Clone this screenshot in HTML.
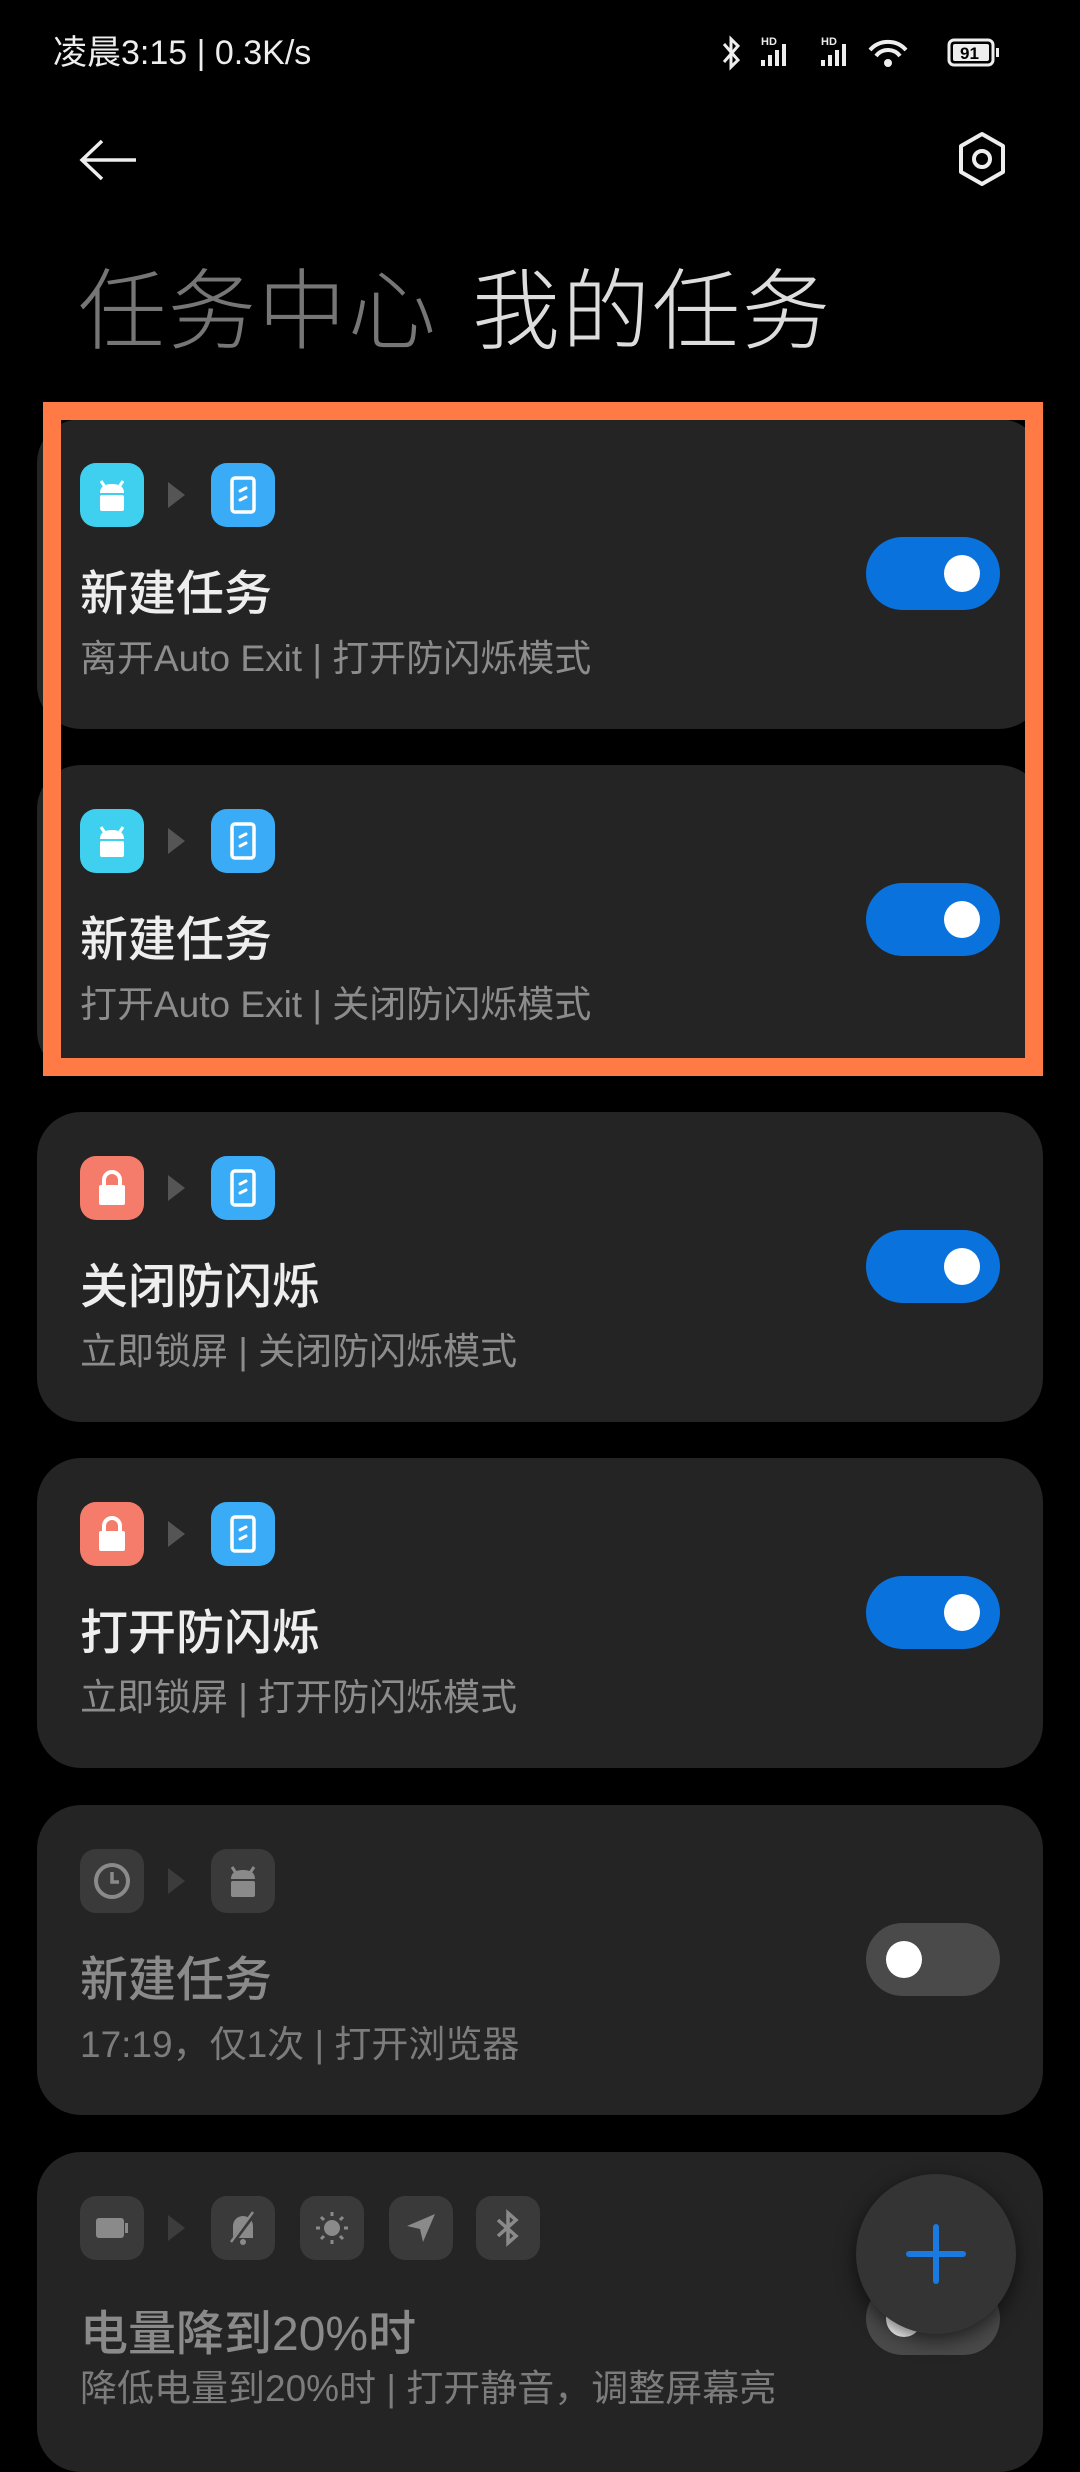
<!DOCTYPE html>
<html><head><meta charset="utf-8"><style>
*{margin:0;padding:0;box-sizing:border-box}
body{width:1080px;height:2400px;background:#000;position:relative;overflow:hidden;font-family:"Liberation Sans","Noto Sans CJK SC",sans-serif;color:#eee}
.abs{position:absolute}
.card{position:absolute;left:37px;width:1006px;height:310px;background:#242424;border-radius:44px}
.ic{position:absolute;top:44px;width:64px;height:64px;border-radius:16px;display:flex;align-items:center;justify-content:center}
.arr{position:absolute;top:63px;left:131px;width:0;height:0;border-top:13px solid transparent;border-bottom:13px solid transparent;border-left:17px solid #555}
.t{position:absolute;left:43px;top:146px;font-size:48px;line-height:60px;font-weight:500;color:#eee}
.s{position:absolute;left:43px;top:216px;font-size:37px;line-height:48px;color:#8c8c8c}
.tg{position:absolute;left:829px;top:118px;width:134px;height:73px;border-radius:37px;background:#0a72dc}
.tg::after{content:"";position:absolute;top:18px;right:20px;width:36px;height:37px;border-radius:50%;background:#fff}
.tg.off{background:#4a4a4a}
.tg.off::after{right:auto;left:20px}
.dis .t{color:#8a8a8a}.dis .s{color:#7c7c7c}
</style></head><body>
<div class="abs" style="left:53px;top:30px;font-size:34px;color:#eee;line-height:46px">凌晨3:15 | 0.3K/s</div>
<svg class="abs" style="left:720px;top:30px" width="300" height="46" viewBox="0 0 300 46">
<path d="M4 14 L18 30 L11 37 L11 9 L18 16 L4 32" fill="none" stroke="#eee" stroke-width="3"/>
<text x="41" y="15" font-size="11" fill="#eee" font-family="Liberation Sans" font-weight="bold">HD</text>
<rect x="41" y="30" width="4" height="6" fill="#eee"/><rect x="48" y="25" width="4" height="11" fill="#eee"/><rect x="55" y="20" width="4" height="16" fill="#eee"/><rect x="62" y="14" width="4" height="22" fill="#eee"/>
<text x="101" y="15" font-size="11" fill="#eee" font-family="Liberation Sans" font-weight="bold">HD</text>
<rect x="101" y="30" width="4" height="6" fill="#eee"/><rect x="108" y="25" width="4" height="11" fill="#eee"/><rect x="115" y="20" width="4" height="16" fill="#eee"/><rect x="122" y="14" width="4" height="22" fill="#eee"/>
<path d="M150 20 A24 24 0 0 1 186 20" fill="none" stroke="#eee" stroke-width="4"/><path d="M156 26 A15 15 0 0 1 180 26" fill="none" stroke="#eee" stroke-width="4"/><circle cx="168" cy="33" r="4" fill="#eee"/>
<rect x="229" y="10" width="44" height="25" rx="5" fill="none" stroke="#eee" stroke-width="3"/><rect x="233" y="14" width="36" height="17" rx="2" fill="#eee"/>
<text x="240" y="29" font-size="17" fill="#000" font-family="Liberation Sans" font-weight="bold">91</text>
<rect x="276" y="18" width="3" height="9" fill="#eee"/>
</svg>
<svg class="abs" style="left:78px;top:138px" width="60" height="44"><path d="M4 22 H58 M24 3 L4 22 L24 41" fill="none" stroke="#eee" stroke-width="3.5"/></svg>
<svg class="abs" style="left:955px;top:131px" width="54" height="56" viewBox="0 0 54 56"><path d="M27 3 L48 15 L48 41 L27 53 L6 41 L6 15 Z" fill="none" stroke="#eee" stroke-width="4" stroke-linejoin="round"/><circle cx="27" cy="28" r="8" fill="none" stroke="#eee" stroke-width="4"/></svg>
<div class="abs" style="left:78px;top:262px;font-size:88px;line-height:100px;font-weight:200;color:#767676;letter-spacing:2px">任务中心</div>
<div class="abs" style="left:472px;top:262px;font-size:88px;line-height:100px;font-weight:200;color:#ddd;letter-spacing:2px">我的任务</div>

<div class="card" style="top:419px">
<div class="ic" style="left:43px;background:#3fd0f0"><svg width="40" height="40"><path d="M9 6 L13 12 M31 6 L27 12" stroke="#fff" stroke-width="3"/><path d="M8 18 Q8 9 20 9 Q32 9 32 18 Z" fill="#fff"/><rect x="8" y="20" width="24" height="16" rx="2" fill="#fff"/></svg></div>
<div class="arr"></div>
<div class="ic" style="left:174px;background:#3aacf7"><svg width="40" height="44"><rect x="9" y="5" width="22" height="34" rx="3" fill="none" stroke="#fff" stroke-width="3.5"/><path d="M17 18 L23 15 M17 27 L23 24" stroke="#fff" stroke-width="3" stroke-linecap="round"/></svg></div>
<div class="t">新建任务</div><div class="s">离开Auto Exit | 打开防闪烁模式</div><div class="tg"></div></div>
<div class="card" style="top:765px">
<div class="ic" style="left:43px;background:#3fd0f0"><svg width="40" height="40"><path d="M9 6 L13 12 M31 6 L27 12" stroke="#fff" stroke-width="3"/><path d="M8 18 Q8 9 20 9 Q32 9 32 18 Z" fill="#fff"/><rect x="8" y="20" width="24" height="16" rx="2" fill="#fff"/></svg></div>
<div class="arr"></div>
<div class="ic" style="left:174px;background:#3aacf7"><svg width="40" height="44"><rect x="9" y="5" width="22" height="34" rx="3" fill="none" stroke="#fff" stroke-width="3.5"/><path d="M17 18 L23 15 M17 27 L23 24" stroke="#fff" stroke-width="3" stroke-linecap="round"/></svg></div>
<div class="t">新建任务</div><div class="s">打开Auto Exit | 关闭防闪烁模式</div><div class="tg"></div></div>
<div class="abs" style="left:43px;top:402px;width:1000px;height:674px;border:18px solid #ff7a45"></div>
<div class="card" style="top:1112px">
<div class="ic" style="left:43px;background:#f57c6a"><svg width="40" height="44"><path d="M12 20 V14 A8 8 0 0 1 28 14 V20" fill="none" stroke="#fff" stroke-width="4"/><rect x="7" y="19" width="26" height="20" rx="2" fill="#fff"/></svg></div>
<div class="arr"></div>
<div class="ic" style="left:174px;background:#3aacf7"><svg width="40" height="44"><rect x="9" y="5" width="22" height="34" rx="3" fill="none" stroke="#fff" stroke-width="3.5"/><path d="M17 18 L23 15 M17 27 L23 24" stroke="#fff" stroke-width="3" stroke-linecap="round"/></svg></div>
<div class="t">关闭防闪烁</div><div class="s">立即锁屏 | 关闭防闪烁模式</div><div class="tg"></div></div>
<div class="card" style="top:1458px">
<div class="ic" style="left:43px;background:#f57c6a"><svg width="40" height="44"><path d="M12 20 V14 A8 8 0 0 1 28 14 V20" fill="none" stroke="#fff" stroke-width="4"/><rect x="7" y="19" width="26" height="20" rx="2" fill="#fff"/></svg></div>
<div class="arr"></div>
<div class="ic" style="left:174px;background:#3aacf7"><svg width="40" height="44"><rect x="9" y="5" width="22" height="34" rx="3" fill="none" stroke="#fff" stroke-width="3.5"/><path d="M17 18 L23 15 M17 27 L23 24" stroke="#fff" stroke-width="3" stroke-linecap="round"/></svg></div>
<div class="t">打开防闪烁</div><div class="s">立即锁屏 | 打开防闪烁模式</div><div class="tg"></div></div>
<div class="card dis" style="top:1805px">
<div class="ic" style="left:43px;background:#3a3a3a"><svg width="44" height="44"><circle cx="22" cy="22" r="16" fill="none" stroke="#8a8a8a" stroke-width="4"/><path d="M22 13 V23 H29" fill="none" stroke="#8a8a8a" stroke-width="3.5"/></svg></div>
<div class="arr" style="border-left-color:#3c3c3c"></div>
<div class="ic" style="left:174px;background:#3a3a3a"><svg width="40" height="40"><path d="M9 6 L13 12 M31 6 L27 12" stroke="#8a8a8a" stroke-width="3"/><path d="M8 18 Q8 9 20 9 Q32 9 32 18 Z" fill="#8a8a8a"/><rect x="8" y="20" width="24" height="16" rx="2" fill="#8a8a8a"/></svg></div>
<div class="t">新建任务</div><div class="s">17:19，仅1次 | 打开浏览器</div><div class="tg off"></div></div>
<div class="card dis" style="top:2152px;height:320px">
<div class="ic" style="left:43px;background:#3a3a3a"><svg width="44" height="44"><rect x="6" y="12" width="28" height="20" rx="3" fill="#8a8a8a"/><rect x="35" y="17" width="3" height="10" fill="#8a8a8a"/></svg></div>
<div class="arr" style="border-left-color:#3c3c3c"></div>
<div class="ic" style="left:174px;background:#3a3a3a"><svg width="44" height="44"><path d="M12 32 V20 A10 10 0 0 1 32 20 V32 Z" fill="#8a8a8a"/><circle cx="22" cy="36" r="3" fill="#8a8a8a"/><path d="M10 38 L34 6" stroke="#3a3a3a" stroke-width="5"/><path d="M10 36 L32 6" stroke="#8a8a8a" stroke-width="2.5"/></svg></div>
<div class="ic" style="left:263px;background:#3a3a3a"><svg width="44" height="44"><circle cx="22" cy="22" r="8" fill="#8a8a8a"/><path d="M22 6V10M22 34V38M6 22H10M34 22H38M11 11L14 14M30 30L33 33M11 33L14 30M30 14L33 11" stroke="#8a8a8a" stroke-width="3"/></svg></div>
<div class="ic" style="left:352px;background:#3a3a3a"><svg width="44" height="44"><path d="M36 8 L8 20 L21 23 L24 36 Z" fill="#8a8a8a"/></svg></div>
<div class="ic" style="left:439px;background:#3a3a3a"><svg width="44" height="44"><path d="M12 14 L30 30 L22 37 L22 7 L30 14 L12 30" fill="none" stroke="#8a8a8a" stroke-width="3.5"/></svg></div>
<div class="t" style="top:153px">电量降到20%时</div><div class="s" style="top:213px">降低电量到20%时 | 打开静音，调整屏幕亮</div><div class="tg off" style="top:130px"></div></div>
<div class="abs" style="left:856px;top:2174px;width:160px;height:160px;border-radius:50%;background:#343434;box-shadow:0 6px 20px rgba(0,0,0,.6)">
<div class="abs" style="left:50px;top:77px;width:60px;height:6px;background:#1a7ae0;border-radius:3px"></div>
<div class="abs" style="left:77px;top:50px;width:6px;height:60px;background:#1a7ae0;border-radius:3px"></div></div>
</body></html>
